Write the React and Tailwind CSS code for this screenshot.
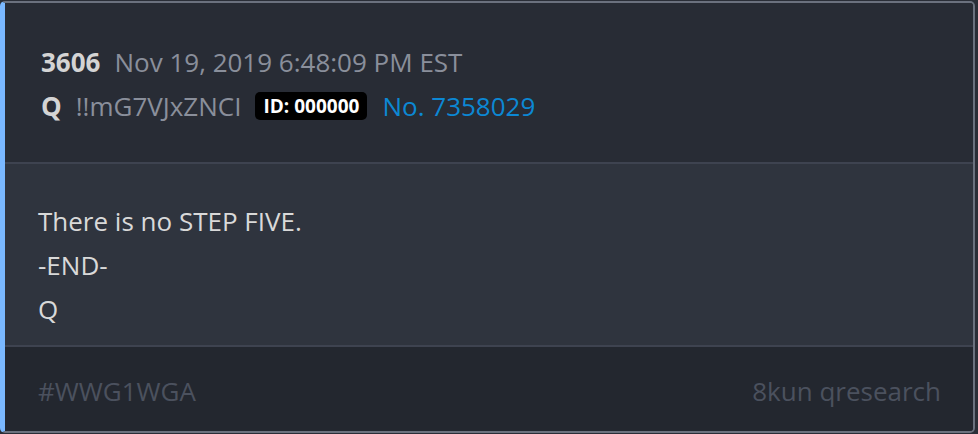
export default function App() {
  return (
    <div className="w-[978px] h-[434px] bg-[#2a2e37] pt-[1px] pr-[3px] pb-[1px]" style={{ fontFamily: '"Open Sans", sans-serif' }}>
      <div className="h-full flex flex-col rounded-[5px] border-2 border-l-[5px] border-[#6b717e] border-l-[#7ab8ff] overflow-hidden">
        {/* Header */}
        <div className="h-[161px] bg-[#282c35] pl-[36px] pt-[41px] border-b-2 border-[#3e4350]">
          <div className="flex items-baseline gap-[14px] text-[26px] leading-[36px]">
            <span className="font-bold text-[#d4d4d4]">3606</span>
            <span className="text-[#8a8f9b]">Nov 19, 2019 6:48:09 PM EST</span>
          </div>
          <div className="flex items-center gap-[14px] mt-[8px] text-[26px] leading-[36px]">
            <span className="font-bold text-[#d4d4d4]">Q</span>
            <span className="text-[#8a8f9b]">!!mG7VJxZNCI</span>
            <span className="w-[112px] text-center bg-black text-white font-bold text-[19px] leading-[28px] rounded-[5px] mr-[1px]">ID: 000000</span>
            <span className="text-[#0c88d4]">No. 7358029</span>
          </div>
        </div>
        {/* Body */}
        <div className="h-[183px] bg-[#2f343e] pl-[33px] pt-[35px] border-b-2 border-[#3e4350] text-[26px] leading-[44px] text-[#d9d9d9]">
          <p>There is no STEP FIVE.</p>
          <p>-END-</p>
          <p>Q</p>
        </div>
        {/* Footer */}
        <div className="flex-1 bg-[#23272f] pl-[33px] pr-[32px] pt-[5px] flex items-center justify-between text-[26px] text-[#4b515e]">
          <span>#WWG1WGA</span>
          <span>8kun qresearch</span>
        </div>
      </div>
    </div>
  );
}
